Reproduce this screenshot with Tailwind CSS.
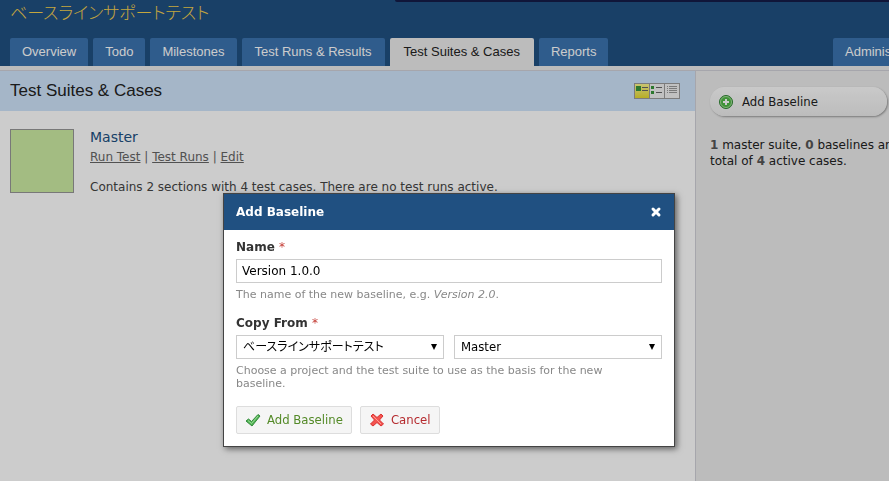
<!DOCTYPE html>
<html lang="en">
<head>
  <meta charset="UTF-8">
  <meta name="viewport" content="width=device-width, initial-scale=1.0">
  <title>Test Suites &amp; Cases</title>
  <script src="https://cdn.jsdelivr.net/npm/@tailwindcss/browser@4"></script>
</head>

<body class="flex flex-col min-h-screen overflow-x-hidden bg-white text-[#444] text-[12px] leading-4 font-['DejaVu_Sans','Noto_Sans_CJK_JP',sans-serif]">

  <!-- Header -->
  <header class="relative flex flex-col justify-between h-[66px] bg-[#205081] pl-[10px] font-['Liberation_Sans','Noto_Sans_CJK_JP',sans-serif]">
    <div class="absolute top-0 left-[395px] right-0 h-[2px] rounded-bl bg-[#141c48]"></div>
    <div class="pt-1 text-[17px] leading-5 font-light text-[#f5d04e] [font-feature-settings:'palt']">ベースラインサポートテスト</div>
    <nav class="flex h-7 gap-[5px] text-[13px] leading-7 whitespace-nowrap">
      <a href="#" class="px-3 rounded-t-xs bg-[#3b73af] text-white">Overview</a>
      <a href="#" class="px-3 rounded-t-xs bg-[#3b73af] text-white">Todo</a>
      <a href="#" class="px-3 rounded-t-xs bg-[#3b73af] text-white">Milestones</a>
      <a href="#" class="px-[13px] rounded-t-xs bg-[#3b73af] text-white">Test Runs &amp; Results</a>
      <a href="#" class="px-[14px] rounded-t-xs bg-[#ebebeb] text-[#222]">Test Suites &amp; Cases</a>
      <a href="#" class="px-3 rounded-t-xs bg-[#3b73af] text-white">Reports</a>
      <div class="ml-auto w-14 overflow-hidden">
        <a href="#" class="block pl-3 rounded-tl-xs bg-[#3b73af] text-white">Administration</a>
      </div>
    </nav>
  </header>
  <div class="h-[5px] bg-[#ebebeb] border-b border-[#d0d0d8]"></div>

  <div class="flex flex-1">
    <!-- Content -->
    <main class="flex-1">
      <div class="flex items-center justify-between h-10 pl-[10px] pr-[15px] bg-[#cfe4fb]">
        <h1 class="text-[17px] leading-6 text-[#222] font-['Liberation_Sans',sans-serif]">Test Suites &amp; Cases</h1>
        <div class="flex border border-[#9c9c9c] divide-x divide-[#9c9c9c]">
          <button class="w-[15px] h-[14px] bg-linear-to-b from-[#fbf58a] to-[#e5da2c]" aria-label="Large view">
            <svg viewBox="0 0 14 14" class="block h-[14px]"><path fill="#38963a" d="M1 2h5v5H1z"/><path stroke="#666" d="M7 3.500h6M7 6.500h6"/></svg>
          </button>
          <button class="w-[15px] h-[14px] bg-[#f2f2f2]" aria-label="Medium view">
            <svg viewBox="0 0 14 14" class="block h-[14px]"><path fill="#38963a" d="M1 2h3v3H1zM1 7h3v3H1z"/><path stroke="#666" d="M6 3.500h6M6 8.500h6"/></svg>
          </button>
          <button class="w-[14px] h-[14px] bg-[#f2f2f2]" aria-label="Compact view">
            <svg viewBox="0 0 14 14" class="block h-[14px]"><path stroke="#999" d="M4 2.500h8M4 4.500h8M4 6.500h8M4 8.500h8M2 2.500h1M2 4.500h1M2 6.500h1M2 8.500h1"/></svg>
          </button>
        </div>
      </div>
      <div class="flex gap-4 pl-[10px] pt-[18px]">
        <div class="w-16 h-16 border border-[#969696] bg-[#cceca3]"></div>
        <div>
          <h2 class="text-[14px] leading-4 text-[#205081]">Master</h2>
          <p class="mt-1 text-[#666]"><a href="#" class="underline">Run Test</a> | <a href="#" class="underline">Test Runs</a> | <a href="#" class="underline">Edit</a></p>
          <p class="mt-[14px]">Contains 2 sections with 4 test cases. There are no test runs active.</p>
        </div>
      </div>
    </main>

    <!-- Sidebar -->
    <aside class="w-[194px] shrink-0 overflow-hidden pl-[14px] pr-[2px] pt-4 bg-[#ebebeb] border-l border-[#d0d0d8] text-[#222]">
      <button class="flex items-center gap-2 w-full h-[29px] pl-2 rounded-full bg-linear-to-b from-[#fcfcfc] to-[#ececec] shadow-[1px_1px_2px_#999] text-[13px] font-['DejaVu_Sans_Condensed','DejaVu_Sans',sans-serif]">
        <svg viewBox="0 0 16 16" class="w-4 h-4">
          <circle cx="8" cy="8" r="6.500" fill="#51b848" stroke="#328536"/>
          <circle cx="8" cy="8" r="5.500" fill="none" stroke="#a2dd98"/>
          <path d="M8 5v6M5 8h6" stroke="#fff" stroke-width="2"/>
        </svg>
        Add Baseline
      </button>
      <p class="mt-[21px] whitespace-nowrap"><b class="text-[#555]">1</b> master suite, <b class="text-[#555]">0</b> baselines and a<br>total of <b class="text-[#555]">4</b> active cases.</p>
    </aside>
  </div>

  <!-- Dialog -->
  <div class="fixed inset-0 bg-black/20"></div>
  <form class="absolute top-[193px] left-[223px] w-[452px] border border-[#444] bg-white shadow-[2px_2px_6px_#0008]">
    <div class="flex items-center justify-between h-9 px-3 bg-[#205081] text-white">
      <h3 class="font-bold">Add Baseline</h3>
      <button type="button" class="w-3 h-3" aria-label="Close">
        <svg viewBox="0 0 12 12"><path d="M3 3l6 6M9 3l-6 6" stroke="#fff" stroke-width="3" stroke-linecap="round"/></svg>
      </button>
    </div>
    <div class="px-3 pt-[9px] pb-3">
      <label for="name" class="block font-bold text-[#333]">Name <span class="font-normal text-[#c43c35]">*</span></label>
      <input id="name" type="text" value="Version 1.0.0" class="block w-full h-6 mt-1 px-[5px] border border-[#ccc] text-black">
      <p class="mt-[5px] text-[11px] leading-[13px] text-[#888]">The name of the new baseline, e.g. <i>Version 2.0</i>.</p>

      <label for="project" class="block mt-[14px] font-bold text-[#333]">Copy From <span class="font-normal text-[#c43c35]">*</span></label>
      <div class="flex gap-[10px] mt-1">
        <div class="relative flex-1">
          <select id="project" class="block w-full h-6 px-[6px] appearance-none border border-[#ccc] bg-white text-black [font-feature-settings:'palt']">
            <option>ベースラインサポートテスト</option>
          </select>
          <svg viewBox="0 0 6 6" class="absolute right-[7px] top-[9px] w-[6px] h-[6px] pointer-events-none"><path d="M0 0h6L3 6z"/></svg>
        </div>
        <div class="relative flex-1">
          <select aria-label="Test suite" class="block w-full h-6 px-[6px] appearance-none border border-[#ccc] bg-white text-black text-[13px] font-['DejaVu_Sans_Condensed','DejaVu_Sans',sans-serif]">
            <option>Master</option>
          </select>
          <svg viewBox="0 0 6 6" class="absolute right-[7px] top-[9px] w-[6px] h-[6px] pointer-events-none"><path d="M0 0h6L3 6z"/></svg>
        </div>
      </div>
      <p class="mt-[5px] pr-6 text-[11px] leading-[13px] text-[#888]">Choose a project and the test suite to use as the basis for the new baseline.</p>

      <div class="flex gap-2 mt-4 text-[13px] font-['DejaVu_Sans_Condensed','DejaVu_Sans',sans-serif]">
        <button type="button" class="flex items-center gap-[6px] h-7 px-2 border border-[#ddd] rounded-xs bg-[#f5f5f5] text-[#548a28]">
          <svg viewBox="0 0 16 16" class="w-4 h-4"><path d="M1 9l2.500-2 3 2.500L13 2.500l2 1.500-8 10z" fill="#4fb352" stroke="#338a3b" stroke-linejoin="round"/><path d="M3 8.500l3.500 3L13 4" fill="none" stroke="#9bdb98"/></svg>
          Add Baseline
        </button>
        <button type="button" class="flex items-center gap-[6px] h-7 px-2 border border-[#ddd] rounded-xs bg-[#f5f5f5] text-[#b52b2f]">
          <svg viewBox="0 0 16 16" class="w-4 h-4"><path d="M2 4l2-2 4 3.500L12 2l2 2-3.500 4 4 4-2.500 2-4-3.500L4 14l-2.500-2 4-4z" fill="#f4534f" stroke="#d93232" stroke-linejoin="round"/><path d="M4 4l8 8" stroke="#ff9a92"/></svg>
          Cancel
        </button>
      </div>
    </div>
  </form>

</body>
</html>
